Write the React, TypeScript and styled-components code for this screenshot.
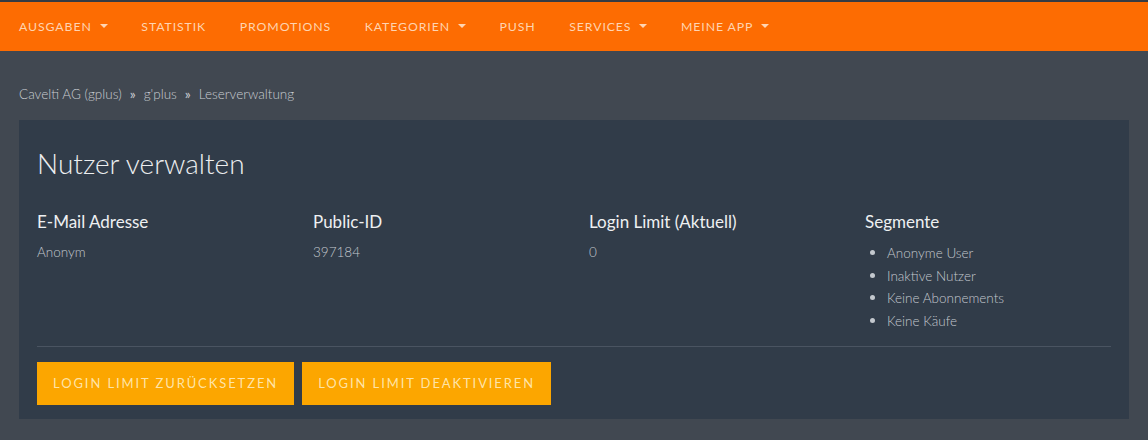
import React from "react";
import styled, { createGlobalStyle } from "styled-components";

const Global = createGlobalStyle`
  html, body { margin: 0; padding: 0; }
  body {
    background: #414851;
    font-family: "Lato", "Open Sans", sans-serif;
    color: #e6e8eb;
  }
`;

const Page = styled.div`
  min-height: 440px;
  border-top: 2px solid #363b43;
  box-sizing: border-box;
`;

const NavBar = styled.nav`
  height: 49px;
  background: #fd6c02;
  display: flex;
  align-items: center;
  padding-left: 19px;
  gap: 33.6px;
`;

const NavItem = styled.a`
  display: flex;
  align-items: center;
  gap: 8px;
  font-size: 12.3px;
  letter-spacing: 0.9px;
  color: rgba(255, 232, 212, 0.85);
  text-transform: uppercase;
  text-decoration: none;
  line-height: 1;
  padding-top: 2px;
`;

const Caret = styled.span`
  width: 0;
  height: 0;
  border-left: 4px solid transparent;
  border-right: 4px solid transparent;
  border-top: 4px solid rgba(255, 232, 212, 0.85);
  margin-top: -2px;
`;

const Main = styled.main`
  padding: 0 19px 21px;
`;

const Breadcrumb = styled.div`
  display: flex;
  align-items: center;
  gap: 8px;
  height: 69px;
  padding-top: 16px;
  box-sizing: border-box;
  font-size: 13.5px;
  font-weight: 300;
  color: #c9cdd2;
`;

const Sep = styled.span`
  font-size: 14px;
  font-weight: 400;
  color: #c9cdd2;
`;

const Card = styled.section`
  background: #313c49;
  padding: 25px 18px 14px;
`;

const Title = styled.h1`
  margin: 0 0 29px;
  font-size: 28px;
  font-weight: 300;
  color: #eceef0;
  line-height: 36px;
`;

const Grid = styled.div`
  display: grid;
  grid-template-columns: repeat(4, 1fr);
  margin-right: -30px;
  padding-bottom: 14px;
`;

const Col = styled.div`
  padding-right: 20px;
`;

const Label = styled.div`
  font-size: 17px;
  color: #eef0f2;
  line-height: 24px;
  margin-bottom: 7px;
`;

const Value = styled.div`
  font-size: 13.5px;
  font-weight: 300;
  color: #c3c8ce;
  line-height: 22.6px;
`;

const List = styled.ul`
  margin: 0;
  padding-left: 22px;
  font-size: 13.5px;
  font-weight: 300;
  color: #c3c8ce;
  line-height: 22.6px;
`;

const Item = styled.li`
  height: 22.67px;
  &::marker { font-size: 15px; }
`;

const Divider = styled.hr`
  margin: 0;
  border: none;
  border-top: 1px solid #4a5461;
`;

const Actions = styled.div`
  display: flex;
  gap: 8px;
  padding-top: 15px;
`;

const Button = styled.button`
  height: 43px;
  padding: 0 16px;
  background: #fca600;
  border: none;
  font-family: inherit;
  font-size: 13px;
  letter-spacing: 1.9px;
  color: rgba(255, 236, 190, 0.9);
  text-transform: uppercase;
  font-weight: 400;
`;

const navItems: { label: string; caret?: boolean }[] = [
  { label: "Ausgaben", caret: true },
  { label: "Statistik" },
  { label: "Promotions" },
  { label: "Kategorien", caret: true },
  { label: "Push" },
  { label: "Services", caret: true },
  { label: "Meine App", caret: true },
];

const segments = ["Anonyme User", "Inaktive Nutzer", "Keine Abonnements", "Keine Käufe"];

export default function App() {
  return (
    <Page>
      <Global />
      <NavBar>
        {navItems.map((n) => (
          <NavItem key={n.label}>
            {n.label}
            {n.caret && <Caret />}
          </NavItem>
        ))}
      </NavBar>
      <Main>
        <Breadcrumb>
          <span>Cavelti AG (gplus)</span>
          <Sep>»</Sep>
          <span>g'plus</span>
          <Sep>»</Sep>
          <span>Leserverwaltung</span>
        </Breadcrumb>
        <Card>
          <Title>Nutzer verwalten</Title>
          <Grid>
            <Col>
              <Label>E-Mail Adresse</Label>
              <Value>Anonym</Value>
            </Col>
            <Col>
              <Label>Public-ID</Label>
              <Value>397184</Value>
            </Col>
            <Col>
              <Label>Login Limit (Aktuell)</Label>
              <Value>0</Value>
            </Col>
            <Col>
              <Label>Segmente</Label>
              <List>
                {segments.map((s) => (
                  <Item key={s}>{s}</Item>
                ))}
              </List>
            </Col>
          </Grid>
          <Divider />
          <Actions>
            <Button>Login Limit zurücksetzen</Button>
            <Button>Login Limit deaktivieren</Button>
          </Actions>
        </Card>
      </Main>
    </Page>
  );
}
